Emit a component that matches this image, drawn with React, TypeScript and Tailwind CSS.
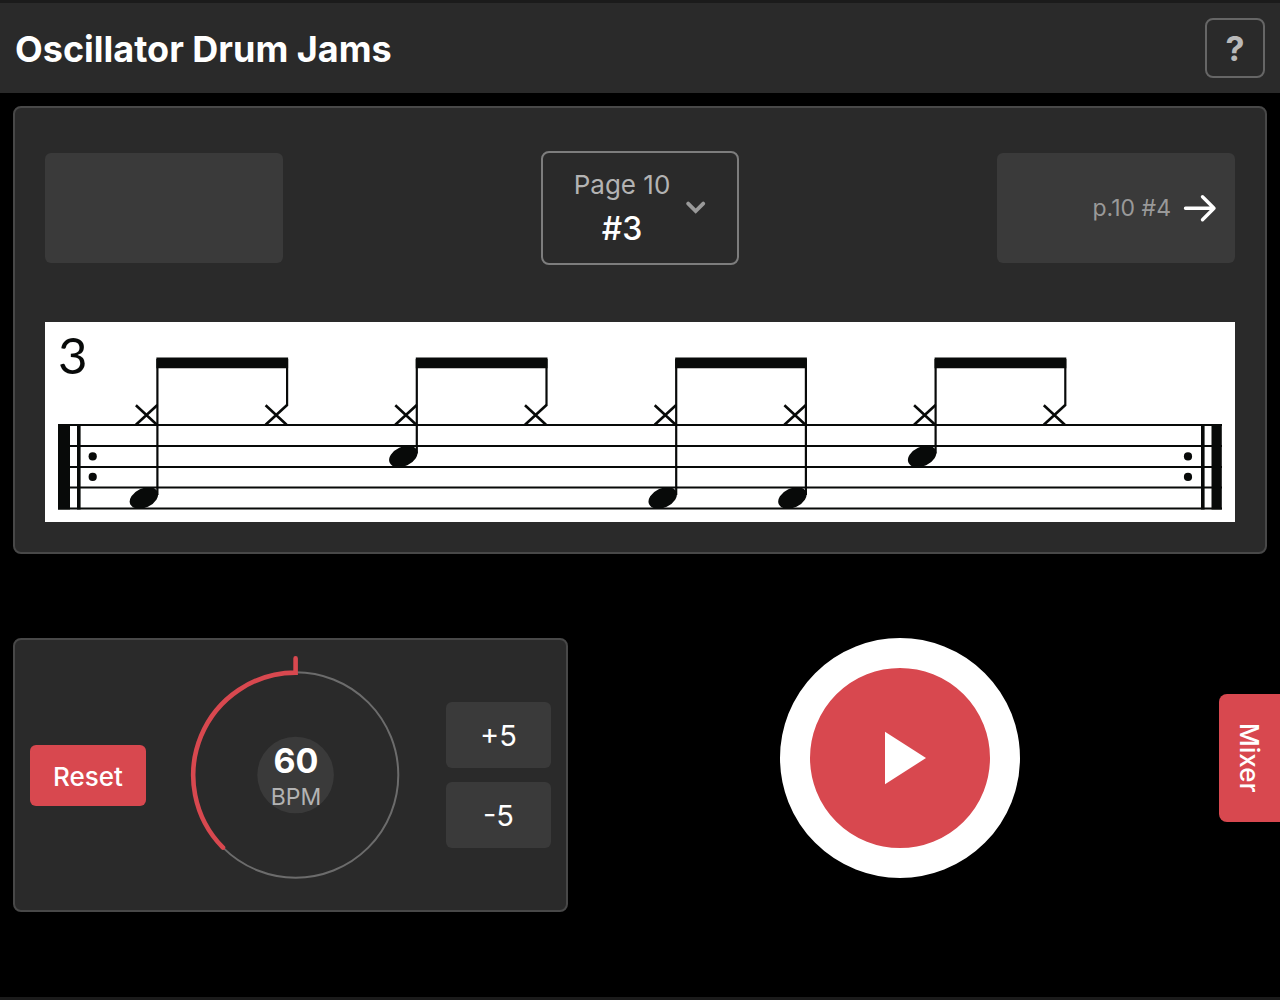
import React, { useState } from "react";

const BEAT = 129.7;
const FIRST_STEM = 112.4;

const KICK_Y = 176;
const SNARE_Y = 134.5;

const staffLines = [103, 124, 145, 165.5, 186.5];

// one entry per eighth note, null means hi-hat only
const pattern = [KICK_Y, null, SNARE_Y, null, KICK_Y, KICK_Y, SNARE_Y, null];

const Notation = () => {
  return (
    <svg
      viewBox="0 0 1190 200"
      className="mt-[57px] block w-full bg-white"
      role="img"
      aria-label="Drum pattern 3"
    >
      <text
        x="13"
        y="52"
        fontSize="51"
        fontFamily="Lato, sans-serif"
        fill="#080a09"
      >
        3
      </text>
      <g stroke="#080a09" strokeWidth="2.2" fill="none">
        {staffLines.map((y) => (
          <path key={y} d={`M13 ${y}H1177`} />
        ))}
      </g>
      <g fill="#080a09">
        <path d="M13 102h12v85.5h-12zM32 102h3.6v85.5h-3.6zM1156 102h3.6v85.5h-3.6zM1166.5 102h10.3v85.5h-10.3z" />
        <circle cx="47.7" cy="134.4" r="4.1" />
        <circle cx="47.7" cy="154.9" r="4.1" />
        <circle cx="1143" cy="134.4" r="4.1" />
        <circle cx="1143" cy="154.9" r="4.1" />
      </g>
      {pattern.map((y, index) => {
        const stem = FIRST_STEM + BEAT * index;
        return (
          <g key={index} stroke="#080a09" fill="none">
            <path
              strokeWidth="2.6"
              d={`M${stem - 21.5} 83.3L${stem - 0.5} 102.7M${stem - 21.5} 102.7L${stem} 83`}
            />
            <path strokeWidth="2.2" d={`M${stem} 37V${y ? y - 3 : 84}`} />
            {index % 2 === 0 && (
              <path
                fill="#080a09"
                stroke="none"
                d={`M${stem - 1} 35.6h${BEAT + 2}v10.6h-${BEAT + 2}z`}
              />
            )}
            {y && (
              <ellipse
                cx={stem - 13.5}
                cy={y}
                rx="15"
                ry="9.6"
                fill="#080a09"
                stroke="none"
                transform={`rotate(-25 ${stem - 13.5} ${y})`}
              />
            )}
          </g>
        );
      })}
    </svg>
  );
};

const Dial = ({ bpm }: { bpm: number }) => {
  return (
    <div className="relative flex size-[240px] flex-col items-center justify-center pt-1">
      <svg viewBox="0 0 240 240" className="absolute inset-0" fill="none">
        <circle cx="119.6" cy="120" r="38.3" fill="#3a3a3a" />
        <circle cx="119.6" cy="120" r="102.7" stroke="#6c6c6c" strokeWidth="2" />
        <path
          d="M47 192.6A102.7 102.7 0 0 1 119.6 17.6V3.4"
          stroke="#d8484f"
          strokeWidth="4.6"
          strokeLinecap="round"
        />
      </svg>
      <span className="relative text-[34px]/[40px] font-bold">{bpm}</span>
      <span className="relative text-[23px]/[32px] text-[#b3b3b3]">BPM</span>
    </div>
  );
};

const stepButton =
  "h-[66px] w-[105px] rounded-md bg-[#3a3a3a] pt-[2px] text-[29px] text-white";

const App = () => {
  const [bpm, setBpm] = useState(60);
  const [playing, setPlaying] = useState(false);

  return (
    <div className="flex min-h-screen flex-col border-y-3 border-[#1b1b1b] bg-black font-[Inter,sans-serif] text-white">
      <header className="flex items-center justify-between bg-[#2a2a2a] p-[15px]">
        <h1 className="pt-[2px] text-[36px]/[40px] font-bold">
          Oscillator Drum Jams
        </h1>
        <button
          aria-label="Help"
          className="size-[60px] rounded-lg border-2 border-[#666] pt-[2px] text-[34px]/[40px] font-bold text-[#b9b9b9]"
        >
          ?
        </button>
      </header>

      <section className="mx-[13px] mt-[13px] rounded-lg border-2 border-[#484848] bg-[#2a2a2a] px-[30px] pt-[43px] pb-[30px]">
        <div className="flex items-center justify-between">
          <button
            aria-label="Previous exercise"
            className="h-[110px] w-[238px] rounded-md bg-[#3a3a3a]"
          />
          <button
            aria-haspopup="listbox"
            className="flex h-[114px] w-[198px] items-center justify-center gap-4 rounded-lg border-2 border-[#7d7d7d]"
          >
            <span className="flex flex-col items-center pb-[2px]">
              <span className="text-[26px]/[44px] text-[#b3b3b3]">Page 10</span>
              <span className="text-[32px]/[44px] font-medium">#3</span>
            </span>
            <svg
              width="20"
              height="14"
              viewBox="0 0 20 14"
              fill="none"
              stroke="#999"
              strokeWidth="3.8"
              strokeLinecap="round"
            >
              <path d="M2.2 2.6L9.7 10L17.2 2.6" />
            </svg>
          </button>
          <button className="flex h-[110px] w-[238px] items-center justify-end gap-3 rounded-md bg-[#3a3a3a] pr-[18px]">
            <span className="text-[23px] text-[#999]">p.10 #4</span>
            <svg
              width="34"
              height="30"
              viewBox="0 0 34 30"
              fill="none"
              stroke="#fff"
              strokeWidth="3.4"
              strokeLinecap="round"
              strokeLinejoin="round"
            >
              <path d="M2.5 15.3H31M19.5 3.8L31 15.3L19.5 26.8" />
            </svg>
          </button>
        </div>
        <Notation />
      </section>

      <section className="mt-[84px] flex items-start pl-[13px]">
        <div className="flex h-[274px] w-[555px] shrink-0 items-center justify-between rounded-lg border-2 border-[#484848] bg-[#2a2a2a] px-[15px]">
          <button
            onClick={() => setBpm(60)}
            className="h-[61px] w-[116px] rounded-md bg-[#d8484f] pt-[2px] text-[26px] font-medium"
          >
            Reset
          </button>
          <Dial bpm={bpm} />
          <div className="flex flex-col gap-[14px]">
            <button onClick={() => setBpm(bpm + 5)} className={stepButton}>
              +5
            </button>
            <button onClick={() => setBpm(bpm - 5)} className={stepButton}>
              -5
            </button>
          </div>
        </div>
        <div className="flex flex-1 items-center">
          <div className="flex flex-1 justify-center pl-[13px]">
            <button
              aria-label={playing ? "Pause" : "Play"}
              onClick={() => setPlaying(!playing)}
              className="flex size-[240px] items-center justify-center rounded-full border-[30px] border-white bg-[#d8484f]"
            >
              <svg width="52" height="54" viewBox="0 0 52 54" fill="#fff">
                {playing ? (
                  <path d="M8 1h12v52H8zM32 1h12v52H32z" />
                ) : (
                  <path d="M11 .8L52 27L11 53.2z" />
                )}
              </svg>
            </button>
          </div>
          <button className="flex h-[128px] w-[61px] items-center justify-center rounded-l-lg bg-[#d8484f] text-[26px] font-medium [writing-mode:vertical-rl]">
            Mixer
          </button>
        </div>
      </section>
    </div>
  );
};

export default App;
